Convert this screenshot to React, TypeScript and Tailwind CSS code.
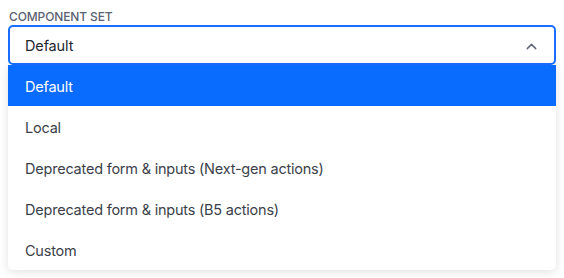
import { ChevronUp } from "lucide-react";

const options = [
  "Default",
  "Local",
  "Deprecated form & inputs (Next-gen actions)",
  "Deprecated form & inputs (B5 actions)",
  "Custom",
];

export default function App() {
  const selected = "Default";

  return (
    <div className="w-[564px] h-[278px] bg-white px-2 pt-[10px] font-['Inter',sans-serif]">
      <label className="block pl-px text-[12px] leading-[14px] font-medium tracking-[-0.01em] text-[#5b6271] mb-[1px]">
        COMPONENT SET
      </label>
      <div className="relative w-[548px]">
        <button className="flex items-center justify-between w-full h-[40px] pl-[15px] pr-[14px] pt-[2px] border-2 border-[#1a6dff] rounded-[5px] bg-white text-[14.5px] tracking-[-0.01em] text-[#23262f]">
          <span>{selected}</span>
          <ChevronUp className="w-[17px] h-[17px] text-[#5e6577]" strokeWidth={2} />
        </button>
        <ul className="w-full bg-white rounded-b-[5px] shadow-[0_2px_10px_rgba(0,0,0,0.12)] overflow-hidden">
          {options.map((opt) => (
            <li
              key={opt}
              className={
                opt === selected
                  ? "h-[41px] flex items-center px-[17px] pt-[2px] text-[14.5px] tracking-[-0.015em] bg-[#0a6bff] text-white"
                  : "h-[41px] flex items-center px-[17px] pt-[2px] text-[14.5px] tracking-[-0.015em] text-[#3b3f4a]"
              }
            >
              {opt}
            </li>
          ))}
        </ul>
      </div>
    </div>
  );
}
